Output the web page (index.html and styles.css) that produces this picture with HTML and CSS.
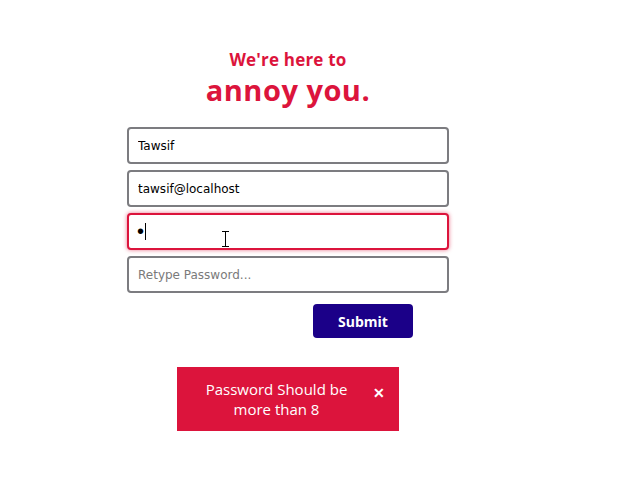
FILE: index.html
```html
<!DOCTYPE html>
<html>
<head>
<meta charset="utf-8">
<link rel="stylesheet" href="styles.css">
</head>
<body>
<main class="wrap">
  <header class="head">
    <h2 class="sub">We're here to</h2>
    <h1 class="title">annoy you.</h1>
  </header>
  <form class="form">
    <input class="field" type="text" value="Tawsif">
    <input class="field" type="text" value="tawsif@localhost">
    <div class="field-wrap">
      <input class="field focus pass" type="password" value="a">
      <span class="caret"></span>
      <svg class="ibeam" width="9" height="16" viewBox="0 0 9 16"><path d="M1 0.5h7M4.5 0.5v15M1 15.5h7" stroke="#000" stroke-width="1" fill="none"/></svg>
    </div>
    <input class="field" type="password" placeholder="Retype Password...">
    <div class="actions"><button class="submit" type="button">Submit</button></div>
  </form>
  <div class="toast">
    <div class="toast-text">Password Should be more than 8</div>
    <span class="close">&#x2715;</span>
  </div>
</main>
</body>
</html>
```
FILE: styles.css
```css
html, body { margin: 0; padding: 0; background: #fff; }
.wrap {
  width: 322px;
  margin-left: 127px;
  padding-top: 50px;
  display: flex;
  flex-direction: column;
  align-items: stretch;
}
.head { text-align: center; color: #dc143c; font-family: "Open Sans", sans-serif; }
.sub { margin: 0 0 4px; font-size: 17px; font-weight: 700; line-height: 20px; letter-spacing: 0.2px; }
.title { margin: 0; font-size: 29px; font-weight: 700; line-height: 32px; letter-spacing: 0.5px; }
.form { margin-top: 21px; display: flex; flex-direction: column; gap: 6px; }
.field-wrap { position: relative; display: flex; }
.field {
  box-sizing: border-box;
  width: 322px;
  height: 37px;
  border: 2px solid #7c7c80;
  border-radius: 4px;
  padding: 0 9px;
  font-family: "DejaVu Sans", sans-serif;
  font-size: 12px;
  color: #000;
  outline: none;
  background: #fff;
}
.field::placeholder { color: #7a7a7a; }
.field.focus {
  border-color: #dc143c;
  box-shadow: 0 0 4px rgba(220, 20, 60, 0.6);
}
.field.pass { font-family: "Liberation Sans", sans-serif; font-size: 20px; letter-spacing: 0; padding-left: 8px; }
.caret { position: absolute; left: 18px; top: 10px; width: 1px; height: 17px; background: #000; }
.ibeam { position: absolute; left: 94px; top: 18px; }
.actions { display: flex; padding-left: 186px; margin-top: 5px; }
.submit {
  width: 100px;
  height: 34px;
  border: none;
  border-radius: 4px;
  background: #1b0088;
  color: #fff;
  font-family: "Open Sans", sans-serif;
  font-weight: 700;
  font-size: 14px;
  cursor: pointer;
}
.toast {
  margin-top: 29px;
  margin-left: 50px;
  width: 222px;
  height: 64px;
  box-sizing: border-box;
  background: #dc143c;
  color: #fff;
  display: flex;
  align-items: center;
  padding: 0 14px 0 15px;
  font-family: "Open Sans", sans-serif;
  font-size: 15px;
  line-height: 20px;
}
.toast-text { flex: 1; text-align: center; padding-right: 12px; }
.close { font-size: 14px; font-weight: 700; margin-top: -12px; }
```
